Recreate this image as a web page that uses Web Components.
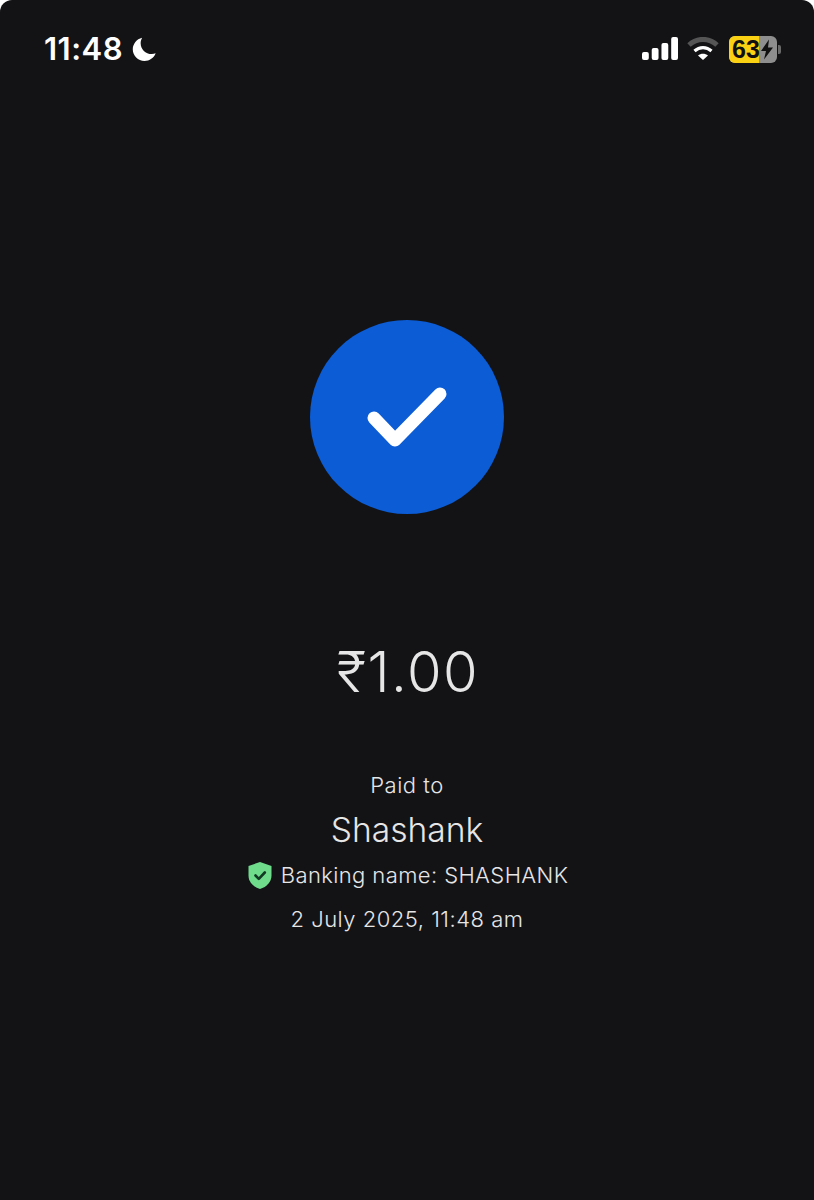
<!DOCTYPE html>
<html>
<head>
<meta charset="utf-8">
<title>Payment</title>
<style>
  html, body { margin: 0; background: #fff; }
  body { width: 814px; height: 1200px; overflow: hidden; font-family: Inter, "Noto Sans", sans-serif; }
</style>
</head>
<body>
<pay-screen>
  <status-bar slot="status" time="11:48" battery="63"></status-bar>
  <success-badge slot="badge"></success-badge>
  <pay-details slot="details" amount="₹1.00" name="Shashank" banking="Banking name: SHASHANK" date="2 July 2025, 11:48 am"></pay-details>
</pay-screen>

<script>
class PayScreen extends HTMLElement {
  connectedCallback() {
    this.attachShadow({ mode: 'open' });
    this.shadowRoot.innerHTML = `
      <style>
        :host {
          display: flex;
          flex-direction: column;
          height: 1200px;
          background: #131316;
          border-radius: 12px 12px 0 0;
          color: #e6e6e6;
        }
        .badge { display: flex; justify-content: center; margin-top: 223px; }
        .details { margin-top: 126px; }
      </style>
      <slot name="status"></slot>
      <div class="badge"><slot name="badge"></slot></div>
      <div class="details"><slot name="details"></slot></div>
    `;
  }
}

class StatusBar extends HTMLElement {
  connectedCallback() {
    this.attachShadow({ mode: 'open' });
    this.shadowRoot.innerHTML = `
      <style>
        :host {
          display: flex;
          align-items: center;
          justify-content: space-between;
          height: 97px;
          padding: 1px 33px 0 44px;
          box-sizing: border-box;
          color: #fff;
        }
        .left, .right { display: flex; align-items: center; }
        .time {
          font: 600 31px/36px Inter, sans-serif;
          letter-spacing: 0.5px;
        }
        .moon { margin-left: 9px; }
        .wifi { margin-left: 9px; }
        .battery {
          position: relative;
          margin-left: 10px;
          width: 48px;
          height: 27px;
          border-radius: 6px;
          overflow: hidden;
          background: #8e8e8e;
        }
        .battery .fill {
          position: absolute;
          left: 0; top: 0; bottom: 0;
          width: 30px;
          background: #fbd113;
        }
        .battery .pct {
          position: absolute;
          left: 3px; top: 0;
          font: 700 25px/27px "Liberation Sans", sans-serif;
          color: #111;
        }
        .battery svg { position: absolute; right: 3px; top: 3px; }
        .nub { width: 3px; height: 9px; margin-left: 1px; background: #6a6a6a; border-radius: 0 2px 2px 0; }
      </style>
      <div class="left">
        <span class="time">${this.getAttribute('time')}</span>
        <svg class="moon" width="25" height="26" viewBox="0 0 26 26"><path fill="#fff" d="M10.5 1.2C4.8 2.6.8 7.6.8 13.3c0 6.8 5.5 12.2 12.2 12.2 5.200 0 9.800-3.200 11.600-8-1.300.5-2.600.7-4 .7-6.600 0-11.600-5-11.600-11.300 0-1.900.5-3.700 1.500-5.700z"/></svg>
      </div>
      <div class="right">
        <svg width="36" height="24" viewBox="0 0 37 24" preserveAspectRatio="none" fill="#fff">
          <rect x="0" y="15" width="7" height="8" rx="2"/>
          <rect x="10" y="11" width="7" height="12" rx="2"/>
          <rect x="20" y="6" width="7" height="17" rx="2"/>
          <rect x="30" y="0" width="7" height="23" rx="2"/>
        </svg>
        <svg class="wifi" width="32" height="24" viewBox="0 0 32 24" fill="none" stroke-linecap="butt">
          <path d="M2 8C10 0.500 22 0.500 30 8" stroke="#555" stroke-width="5"/>
          <path d="M7.500 14C12.500 9.500 19.500 9.500 24.500 14" stroke="#fff" stroke-width="3.200"/>
          <path d="M16 23 11 18.500C13.800 16.200 18.200 16.200 21 18.500Z" fill="#fff"/>
        </svg>
        <div class="battery">
          <div class="fill"></div>
          <span class="pct">${this.getAttribute('battery')}</span>
          <svg width="14" height="21" viewBox="0 0 14 20"><path fill="#111" d="M9 0 1 11.500h5L4 20l9-12H8z"/></svg>
        </div>
        <div class="nub"></div>
      </div>
    `;
  }
}

class SuccessBadge extends HTMLElement {
  connectedCallback() {
    this.attachShadow({ mode: 'open' });
    this.shadowRoot.innerHTML = `
      <style>
        :host {
          display: flex;
          align-items: center;
          justify-content: center;
          width: 194px;
          height: 194px;
          border-radius: 50%;
          background: #0b5cd5;
        }
      </style>
      <svg width="80" height="62" viewBox="0 0 80 62">
        <path d="M7 32 28 54 73 8" fill="none" stroke="#fff" stroke-width="13" stroke-linecap="round" stroke-linejoin="round"/>
      </svg>
    `;
  }
}

class PayDetails extends HTMLElement {
  connectedCallback() {
    this.attachShadow({ mode: 'open' });
    this.shadowRoot.innerHTML = `
      <style>
        :host {
          display: flex;
          flex-direction: column;
          align-items: center;
          color: #e6e6e6;
          font-family: Inter, sans-serif;
        }
        .amount { padding-left: 2px; font-weight: 350; font-size: 56px; line-height: 64px; letter-spacing: 1.500px; }
        .label { margin-top: 67px; font-size: 22px; line-height: 28px; font-weight: 300; letter-spacing: 0.5px; }
        .name { margin-top: 10px; font-size: 33.600px; line-height: 42px; font-weight: 300; }
        .bank { margin-top: 8px; padding-left: 2px; display: flex; align-items: center; gap: 9px; font-size: 22px; line-height: 32px; font-weight: 300; letter-spacing: 0.4px; }
        .date { margin-top: 12px; font-size: 22px; line-height: 32px; font-weight: 300; letter-spacing: 0.5px; }
      </style>
      <div class="amount">${this.getAttribute('amount')}</div>
      <div class="label">Paid to</div>
      <div class="name">${this.getAttribute('name')}</div>
      <div class="bank">
        <svg width="24" height="27" viewBox="0 0 24 27">
          <path fill="#6fdc8c" d="M12 0 23.500 4v9.500C23.500 20 18.800 24.800 12 27 5.200 24.800.5 20 .5 13.500V4z"/>
          <path fill="none" stroke="#123a22" stroke-width="2.600" stroke-linecap="round" stroke-linejoin="round" d="M7.500 13.500 10.800 16.800 16.800 10.500"/>
        </svg>
        <span>${this.getAttribute('banking')}</span>
      </div>
      <div class="date">${this.getAttribute('date')}</div>
    `;
  }
}

customElements.define('pay-screen', PayScreen);
customElements.define('status-bar', StatusBar);
customElements.define('success-badge', SuccessBadge);
customElements.define('pay-details', PayDetails);
</script>
</body>
</html>
